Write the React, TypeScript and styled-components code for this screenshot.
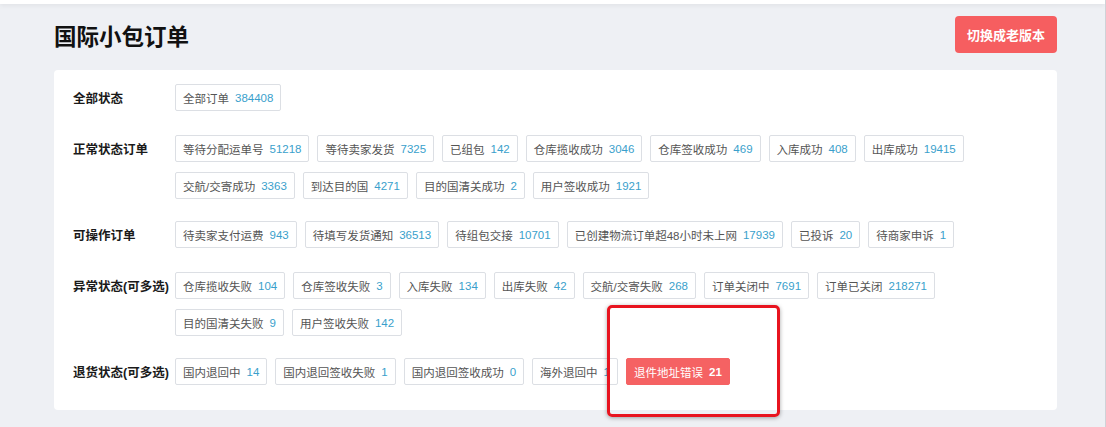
import styled, { createGlobalStyle } from "styled-components";

const GlobalStyle = createGlobalStyle`
  html, body {
    margin: 0;
    padding: 0;
    background: #eef0f4;
  }
  body {
    font-family: "Liberation Sans", "Noto Sans CJK SC", sans-serif;
    color: #333;
  }
`;

const Page = styled.div`
  position: relative;
  width: 1105px;
  height: 427px;
  overflow: hidden;
  background: #eef0f4;
  border-right: 1px solid #cfd2d7;
`;

const TopStrip = styled.div`
  height: 4px;
  background: #fff;
  box-shadow: 0 1px 5px rgba(0, 0, 0, 0.08);
`;

const Main = styled.div`
  padding: 12px 48px 0 54px;
`;

const Header = styled.div`
  display: flex;
  align-items: center;
  justify-content: space-between;
  margin-bottom: 17px;
`;

const Title = styled.h1`
  margin: 0;
  font-size: 22.5px;
  font-weight: 700;
  color: #111;
`;

const SwitchButton = styled.button`
  height: 37px;
  padding: 0 12px;
  border: none;
  border-radius: 4px;
  background: #f65e60;
  color: #fff;
  font-family: inherit;
  font-size: 13px;
  font-weight: 700;
  cursor: pointer;
`;

const Card = styled.div`
  background: #fff;
  border-radius: 4px;
  padding: 14px 36px 23px 19px;
  display: flex;
  flex-direction: column;
  gap: 22px;
`;

const NextCard = styled.div`
  margin-top: 19px;
  height: 40px;
  background: #fff;
  border-radius: 4px;
`;

const Section = styled.div`
  display: flex;
  align-items: flex-start;
`;

const Label = styled.div`
  flex: 0 0 102px;
  padding-top: 2px;
  line-height: 27px;
  font-size: 12.5px;
  font-weight: 700;
  color: #1a1a1a;
`;

const TagList = styled.div`
  flex: 1;
  display: flex;
  flex-wrap: wrap;
  gap: 10px 8px;
`;

const Tag = styled.div<{ $active?: boolean }>`
  height: 27px;
  box-sizing: border-box;
  display: flex;
  align-items: center;
  padding: 0 7px;
  border: 1px solid ${(p) => (p.$active ? "#f56263" : "#dcdfe4")};
  border-radius: 2px;
  background: ${(p) => (p.$active ? "#f56263" : "#fff")};
  color: ${(p) => (p.$active ? "#fff" : "#555")};
  font-size: 11.5px;
  white-space: nowrap;
`;

const Count = styled.span<{ $active?: boolean }>`
  margin-left: 6px;
  color: ${(p) => (p.$active ? "#fff" : "#3a9fcc")};
  font-weight: ${(p) => (p.$active ? 700 : 400)};
`;

const Annotation = styled.div`
  position: absolute;
  left: 607px;
  top: 305px;
  width: 173px;
  height: 112px;
  box-sizing: border-box;
  border: 3px solid #e8141f;
  border-radius: 5px;
  box-shadow: 0 1px 4px rgba(0, 0, 0, 0.35);
  pointer-events: none;
`;

type Item = { name: string; count: number; active?: boolean };

const sections: { label: string; items: Item[] }[] = [
  { label: "全部状态", items: [{ name: "全部订单", count: 384408 }] },
  {
    label: "正常状态订单",
    items: [
      { name: "等待分配运单号", count: 51218 },
      { name: "等待卖家发货", count: 7325 },
      { name: "已组包", count: 142 },
      { name: "仓库揽收成功", count: 3046 },
      { name: "仓库签收成功", count: 469 },
      { name: "入库成功", count: 408 },
      { name: "出库成功", count: 19415 },
      { name: "交航/交寄成功", count: 3363 },
      { name: "到达目的国", count: 4271 },
      { name: "目的国清关成功", count: 2 },
      { name: "用户签收成功", count: 1921 },
    ],
  },
  {
    label: "可操作订单",
    items: [
      { name: "待卖家支付运费", count: 943 },
      { name: "待填写发货通知", count: 36513 },
      { name: "待组包交接", count: 10701 },
      { name: "已创建物流订单超48小时未上网", count: 17939 },
      { name: "已投诉", count: 20 },
      { name: "待商家申诉", count: 1 },
    ],
  },
  {
    label: "异常状态(可多选)",
    items: [
      { name: "仓库揽收失败", count: 104 },
      { name: "仓库签收失败", count: 3 },
      { name: "入库失败", count: 134 },
      { name: "出库失败", count: 42 },
      { name: "交航/交寄失败", count: 268 },
      { name: "订单关闭中", count: 7691 },
      { name: "订单已关闭", count: 218271 },
      { name: "目的国清关失败", count: 9 },
      { name: "用户签收失败", count: 142 },
    ],
  },
  {
    label: "退货状态(可多选)",
    items: [
      { name: "国内退回中", count: 14 },
      { name: "国内退回签收失败", count: 1 },
      { name: "国内退回签收成功", count: 0 },
      { name: "海外退回中", count: 1 },
      { name: "退件地址错误", count: 21, active: true },
    ],
  },
];

function App() {
  return (
    <Page>
      <GlobalStyle />
      <TopStrip />
      <Main>
        <Header>
          <Title>国际小包订单</Title>
          <SwitchButton>切换成老版本</SwitchButton>
        </Header>
        <Card>
          {sections.map((s) => (
            <Section key={s.label}>
              <Label>{s.label}</Label>
              <TagList>
                {s.items.map((it) => (
                  <Tag key={it.name} $active={it.active}>
                    {it.name}
                    <Count $active={it.active}>{it.count}</Count>
                  </Tag>
                ))}
              </TagList>
            </Section>
          ))}
        </Card>
        <NextCard />
      </Main>
      <Annotation />
    </Page>
  );
}

export default App;
